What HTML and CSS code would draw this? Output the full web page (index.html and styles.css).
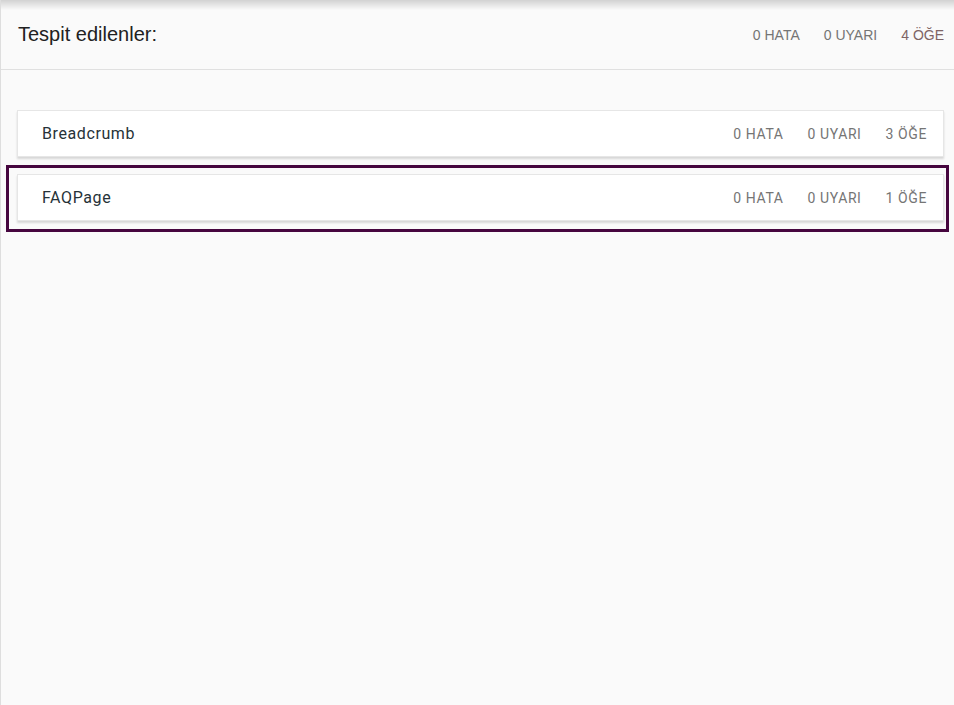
FILE: index.html
```html
<!DOCTYPE html>
<html lang="tr">
<head>
<meta charset="utf-8">
<title>Tespit edilenler</title>
<link rel="stylesheet" href="styles.css">
</head>
<body>
<div class="page">
  <header class="head">
    <h1 class="title">Tespit edilenler:</h1>
    <div class="stats head-stats">
      <span>0 HATA</span>
      <span>0 UYARI</span>
      <span class="items">4 ÖĞE</span>
    </div>
  </header>
  <div class="list">
    <div class="item">
      <div class="card">
        <span class="name">Breadcrumb</span>
        <div class="stats card-stats">
          <span>0 HATA</span>
          <span>0 UYARI</span>
          <span>3 ÖĞE</span>
        </div>
      </div>
    </div>
    <div class="item selected">
      <div class="card">
        <span class="name">FAQPage</span>
        <div class="stats card-stats">
          <span>0 HATA</span>
          <span>0 UYARI</span>
          <span>1 ÖĞE</span>
        </div>
      </div>
    </div>
  </div>
</div>
</body>
</html>
```
FILE: styles.css
```css
html, body {
  margin: 0;
  padding: 0;
  height: 100%;
}
body {
  background: #fafafa;
}
.page {
  min-height: 100%;
  box-sizing: border-box;
  border-left: 1px solid #dedede;
  background: #fafafa;
  position: relative;
}
.page::before {
  content: "";
  position: absolute;
  left: 0;
  right: 0;
  top: 0;
  height: 10px;
  background: linear-gradient(to bottom, rgba(0,0,0,0.16), rgba(0,0,0,0));
  pointer-events: none;
}
.head {
  height: 70px;
  box-sizing: border-box;
  border-bottom: 1px solid #e0e0e0;
  display: flex;
  align-items: center;
  justify-content: space-between;
  padding: 0 10px 0 17px;
}
.title {
  margin: 0;
  font-family: "Liberation Sans", Arial, sans-serif;
  font-weight: normal;
  font-size: 20px;
  color: #212121;
}
.stats {
  display: flex;
}
.head-stats {
  gap: 24px;
  font-family: "Liberation Sans", Arial, sans-serif;
  font-size: 14px;
  color: #757575;
}
.head-stats .items {
  color: #7e6464;
}
.list {
  margin-top: 34px;
}
.item {
  margin: 0 8px 3px 8px;
  padding: 6px 2px 8px 8px;
}
.item.selected {
  outline: 3px solid #46063f;
}
.card {
  height: 47px;
  box-sizing: border-box;
  background: #fff;
  border: 1px solid #e6e6e6;
  box-shadow: 0 2px 2px rgba(0,0,0,0.14);
  display: flex;
  align-items: center;
  justify-content: space-between;
  padding: 0 16px 0 24px;
}
.name {
  font-family: Roboto, "Noto Sans", sans-serif;
  font-size: 16px;
  color: #263238;
  letter-spacing: 0.6px;
}
.card-stats {
  gap: 24px;
  font-family: Roboto, "Noto Sans", sans-serif;
  font-size: 14px;
  letter-spacing: 0.6px;
  color: #757575;
}
```
